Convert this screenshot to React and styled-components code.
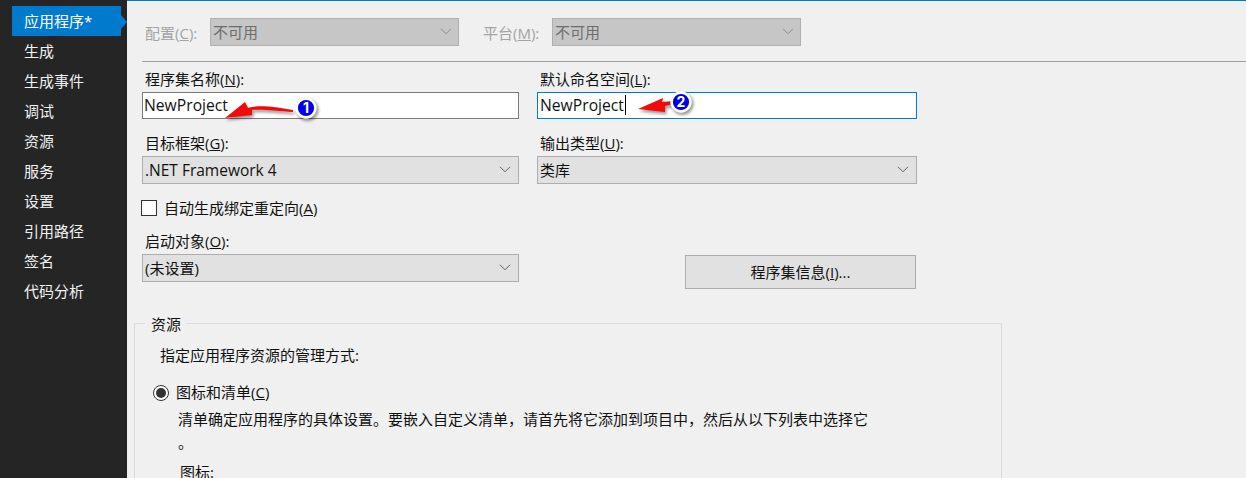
import React from "react";
import styled, { createGlobalStyle } from "styled-components";

const FONT = `"Open Sans", "Noto Sans CJK SC", sans-serif`;

const Global = createGlobalStyle`
  html, body { margin: 0; padding: 0; background: #f0f0f0; }
  body { font-family: ${FONT}; font-size: 15px; color: #111; }
`;

const Page = styled.div`
  width: 1246px; height: 478px; display: flex; overflow: hidden; position: relative;
  background: #f0f0f0;
`;
const Sidebar = styled.nav`
  width: 127px; flex: none; background: #252526; padding: 6px 0 0 12px; box-sizing: border-box;
`;
const NavItem = styled.div`
  width: 109px; height: 30px; line-height: 30px; box-sizing: border-box; padding-left: 12px;
  color: ${p => (p.$active ? "#ffffff" : "#f1f1f1")};
  background: ${p => (p.$active ? "#007acc" : "transparent")};
  font-size: 15px; position: relative; white-space: nowrap;
  ${p => p.$active && `&::after {
    content: ""; position: absolute; left: 109px; top: 9px;
    border-left: 6px solid #007acc; border-top: 7px solid transparent; border-bottom: 7px solid transparent;
  }`}
`;
const Main = styled.main`
  flex: 1; min-width: 0; border-top: 1px solid #007acc; box-sizing: border-box; display: flex; flex-direction: column;
  & > * { flex-shrink: 0; }
`;
const TopBar = styled.div`
  display: flex; align-items: center; height: 61px; border-bottom: 1px solid #a0a0a0;
  margin-left: 15px; padding: 2px 0 0 3px; box-sizing: border-box;
`;
const TopLabel = styled.span`
  color: #a2a4a5; width: ${p => p.$w}px; flex: none; white-space: nowrap;
`;
const DisabledSelect = styled.div`
  width: 249px; height: 28px; box-sizing: border-box; background: #c6c6c6; border: 1px solid #b0b0b0;
  color: #6d6d6d; display: flex; align-items: center; justify-content: space-between;
  padding: 0 6px 2px 2px; margin-right: ${p => p.$mr || 0}px; flex: none;
`;
const Form = styled.div`
  display: grid; grid-template-columns: 377px 380px; column-gap: 18px; margin-left: 15px; padding-top: 8px;
`;
const Field = styled.div`
  display: flex; flex-direction: column;
`;
const Label = styled.div`
  height: 22px; line-height: 19px; padding-left: 3px; white-space: nowrap;
`;
const TextBox = styled.div`
  height: 27px; box-sizing: border-box; background: #fff; line-height: 25px; font-size: 15.7px;
  border: 1px solid ${p => (p.$focus ? "#007acc" : "#7a7a7a")}; padding-left: ${p => (p.$focus ? 2 : 1)}px; display: flex;
`;
const Caret = styled.span`
  display: block; width: 1px; height: 20px; background: #000; margin: 2px 0 0 1px;
`;
const Select = styled.div`
  height: 28px; box-sizing: border-box; background: #e1e1e1; border: 1px solid #adadad;
  display: flex; align-items: center; justify-content: space-between; padding: 0 7px 1px 2px;
`;
const Latin = styled.span`
  font-size: 15.5px;
`;
const Chevron = styled.svg`
  width: 12px; height: 7px; flex: none; fill: none; stroke: ${p => p.$c || "#5f5f5f"}; stroke-width: 1;
`;
const FirstRow = styled(Field)`
  margin-bottom: 15px;
`;
const CheckRow = styled.label`
  grid-column: 1 / -1; display: flex; align-items: center; height: 16px; margin-top: 1px; margin-bottom: 16px; gap: 7px;
  white-space: nowrap;
`;
const CheckText = styled.span`
  padding-bottom: 2px;
`;
const Check = styled.span`
  width: 16px; height: 16px; margin-left: -1px; box-sizing: border-box; border: 1px solid #333; background: #fff; flex: none;
`;
const ButtonCell = styled.div`
  display: flex; justify-content: flex-start; padding: 23px 0 0 148px;
`;
const Button = styled.div`
  width: 231px; height: 34px; box-sizing: border-box; background: #e1e1e1; border: 1px solid #adadad;
  display: flex; align-items: center; justify-content: center; padding-bottom: 2px; white-space: pre;
`;
const Group = styled.section`
  position: relative; margin: 34px 0 0 7px; width: 868px; border: 1px solid #dcdcdc; border-bottom: 0;
  box-sizing: border-box; height: 200px; padding: 21px 0 0 25px;
`;
const Legend = styled.div`
  position: absolute; left: 10px; top: -10px; background: #f0f0f0; padding: 0 6px; height: 20px; line-height: 20px; font-size: 15px;
`;
const GroupIntro = styled.div`
  height: 20px; line-height: 20px; white-space: nowrap;
`;
const RadioRow = styled.div`
  display: flex; align-items: center; gap: 7px; margin: 18px 0 0 -7px; height: 20px; white-space: nowrap;
`;
const RadioText = styled.span`
  padding-bottom: 3px;
`;
const Radio = styled.span`
  width: 16px; height: 16px; box-sizing: border-box; border: 1px solid #333; border-radius: 50%; background: #fff;
  display: flex; align-items: center; justify-content: center; flex: none;
  &::before { content: ""; width: 10px; height: 10px; border-radius: 50%; background: #333; }
`;
const Desc = styled.div`
  margin: 5px 0 0 18px; width: 700px; line-height: 23px; font-size: 15px;
`;
const IconLabel = styled.div`
  margin: 8px 0 0 20px; line-height: 20px;
`;
const Overlay = styled.svg`
  position: absolute; left: ${p => p.$x}px; top: ${p => p.$y}px; overflow: visible;
`;

const Arrow = ({ x, y, n, w, h, shape, cx, cy }) => (
  <Overlay $x={x} $y={y} width={w} height={h} viewBox={`0 0 ${w} ${h}`}>
    <defs>
      <filter id={`blur${n}`} x="-30%" y="-60%" width="160%" height="220%"><feGaussianBlur stdDeviation="1.5" /></filter>
      <filter id={`cs${n}`} x="-40%" y="-40%" width="200%" height="200%"><feGaussianBlur stdDeviation="1.5" /></filter>
    </defs>
    <path d={shape} fill="#000" opacity=".4" transform="translate(1.5 2.5)" filter={`url(#blur${n})`} />
    <path d={shape} fill="#f20a0a" />
    <circle cx={cx + 1.5} cy={cy + 2} r="11" fill="#000" opacity=".4" filter={`url(#cs${n})`} />
    <circle cx={cx} cy={cy} r="9.4" fill="#0000e6" stroke="#fff" strokeWidth="2.6" />
    <text x={cx} y={cy + 5} textAnchor="middle" fill="#fff" fontSize="14" fontWeight="700" fontFamily="Inter, sans-serif">{n}</text>
  </Overlay>
);

const Dn = ({ c }) => (
  <Chevron $c={c} viewBox="0 0 12 7"><path d="M1 .8 6 5.8 11 .8" /></Chevron>
);

const NAV = ["生成", "生成事件", "调试", "资源", "服务", "设置", "引用路径", "签名", "代码分析"];

export default function App() {
  return (
    <Page>
      <Global />
      <Sidebar>
        <NavItem $active>应用程序*</NavItem>
        {NAV.map(n => <NavItem key={n}>{n}</NavItem>)}
      </Sidebar>
      <Main>
        <TopBar>
          <TopLabel $w={65}>配置(<u>C</u>):</TopLabel>
          <DisabledSelect $mr={24}>不可用<Dn c="#8c8c8c" /></DisabledSelect>
          <TopLabel $w={69}>平台(<u>M</u>):</TopLabel>
          <DisabledSelect>不可用<Dn c="#8c8c8c" /></DisabledSelect>
        </TopBar>
        <Form>
          <FirstRow>
            <Label>程序集名称(<u>N</u>):</Label>
            <TextBox>NewProject</TextBox>
          </FirstRow>
          <FirstRow>
            <Label>默认命名空间(<u>L</u>):</Label>
            <TextBox $focus>NewProject<Caret /></TextBox>
          </FirstRow>
          <FirstRow>
            <Label>目标框架(<u>G</u>):</Label>
            <Select><Latin>.NET Framework 4</Latin><Dn /></Select>
          </FirstRow>
          <FirstRow>
            <Label>输出类型(<u>U</u>):</Label>
            <Select>类库<Dn /></Select>
          </FirstRow>
          <CheckRow><Check /><CheckText>自动生成绑定重定向(<u>A</u>)</CheckText></CheckRow>
          <Field>
            <Label>启动对象(<u>O</u>):</Label>
            <Select>(未设置)<Dn /></Select>
          </Field>
          <ButtonCell>
            <Button><span>程序集信息(<u>I</u>)...</span></Button>
          </ButtonCell>
        </Form>
        <Group>
          <Legend>资源</Legend>
          <GroupIntro>指定应用程序资源的管理方式:</GroupIntro>
          <RadioRow><Radio /><RadioText>图标和清单(<u>C</u>)</RadioText></RadioRow>
          <Desc>清单确定应用程序的具体设置。要嵌入自定义清单，请首先将它添加到项目中，然后从以下列表中选择它<br />。</Desc>
          <IconLabel>图标:</IconLabel>
        </Group>
      </Main>
      <Arrow x={222} y={96} n={1} w={100} h={28} cx={84} cy={12}
        shape="M3 22 L23 6 L26 12 C35 9 50 10 71 14 L71 16 C55 15 40 13 30 14 L30 19 Z" />
      <Arrow x={636} y={90} n={2} w={60} h={28} cx={45} cy={12}
        shape="M2 19 L27 8 L26 12 L37 11 L37 14 L29 16 L29 22 Z" />
    </Page>
  );
}
